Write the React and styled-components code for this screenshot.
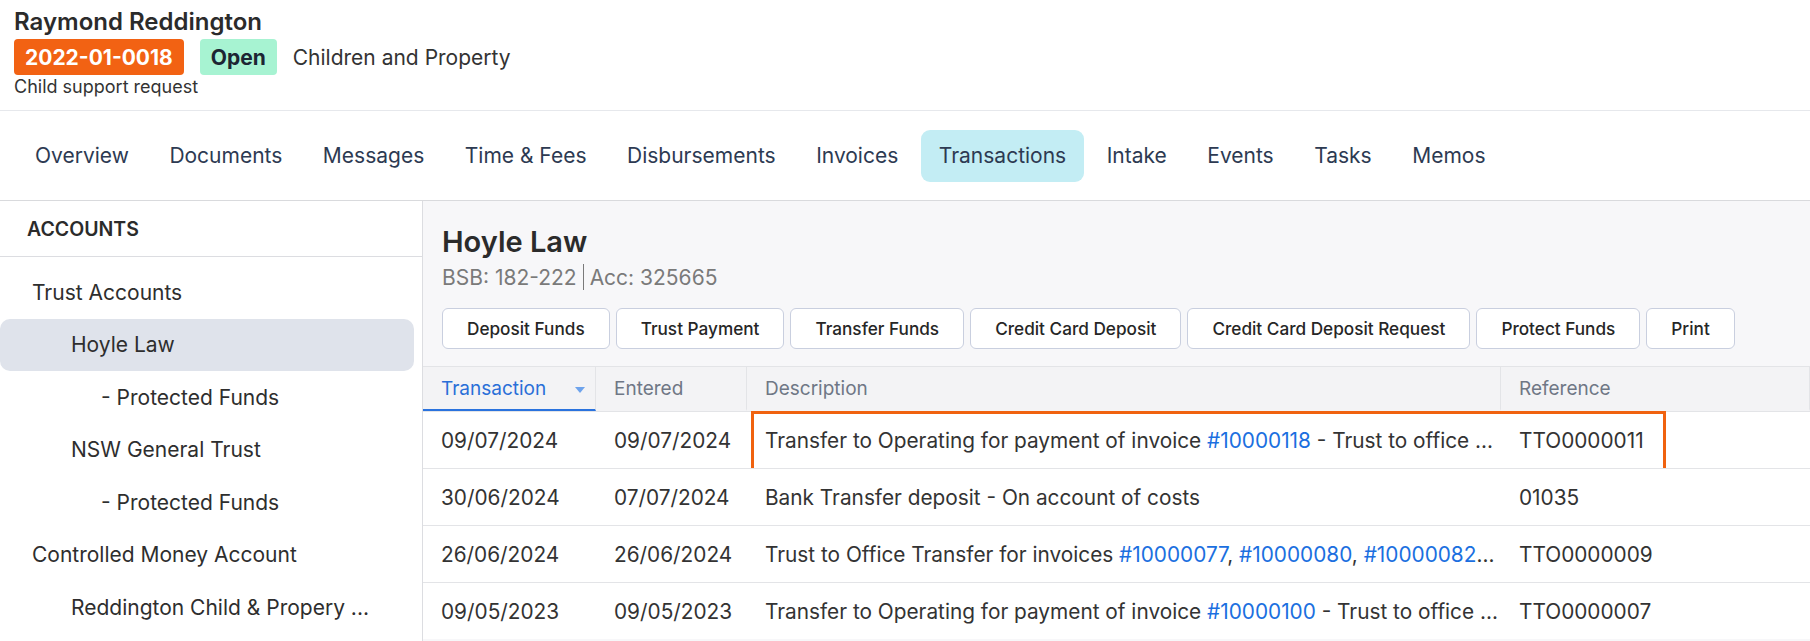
import React from 'react';
import styled, { createGlobalStyle } from 'styled-components';

const GlobalStyle = createGlobalStyle`
  html, body {
    margin: 0;
    padding: 0;
    background: #fff;
    font-family: Inter, "Open Sans", sans-serif;
    color: #2e2e2e;
  }
  * {
    box-sizing: border-box;
  }
`;

const Page = styled.div`
  width: 1810px;
  height: 641px;
  overflow: hidden;
  display: flex;
  flex-direction: column;
`;

const Header = styled.header`
  height: 111px;
  flex-shrink: 0;
  padding: 7px 14px 0;
  border-bottom: 1px solid #e6e8ec;
`;

const Title = styled.h1`
  margin: 0;
  font-size: 24px;
  line-height: 30px;
  font-weight: 600;
  color: #2b2b2b;
`;

const BadgeRow = styled.div`
  display: flex;
  align-items: center;
  gap: 16px;
  margin-top: 2px;
`;

const Badge = styled.span`
  display: inline-flex;
  align-items: center;
  height: 36px;
  padding: 0 11px;
  border-radius: 4px;
  font-size: 21px;
  font-weight: 700;
  background: ${(p) => (p.$tone === 'orange' ? '#f26213' : '#a7f3d2')};
  color: ${(p) => (p.$tone === 'orange' ? '#fff' : '#1c2533')};
`;

const Category = styled.span`
  font-size: 21px;
  color: #333;
`;

const Sub = styled.div`
  margin-top: 1px;
  font-size: 18px;
  line-height: 22px;
  color: #333;
`;

const Tabs = styled.nav`
  height: 90px;
  flex-shrink: 0;
  display: flex;
  align-items: center;
  gap: 4.5px;
  padding-left: 17px;
  border-bottom: 1px solid #d9dadd;
`;

const Tab = styled.div`
  height: 52px;
  display: flex;
  align-items: center;
  padding: 0 18px;
  border-radius: 9px;
  font-size: 21px;
  color: #2d3a52;
  background: ${(p) => (p.$active ? '#c3edf4' : 'transparent')};
`;

const Body = styled.div`
  flex: 1;
  display: flex;
  min-height: 0;
`;

const Sidebar = styled.aside`
  width: 423px;
  flex-shrink: 0;
  border-right: 1px solid #dcdde1;
`;

const SideHead = styled.div`
  height: 56px;
  display: flex;
  align-items: center;
  padding-left: 27px;
  border-bottom: 1px solid #dcdde1;
  font-size: 19.5px;
  font-weight: 600;
  color: #2b2b2b;
`;

const SideList = styled.div`
  padding: 9px 8px 0 0;
`;

const SideItem = styled.div`
  height: 52.5px;
  display: flex;
  align-items: center;
  padding-left: ${(p) => [32, 71, 101][p.$level]}px;
  border-radius: 10px;
  font-size: 21px;
  color: #2e2e2e;
  white-space: nowrap;
  background: ${(p) => (p.$active ? '#dfe3eb' : 'transparent')};
`;

const Main = styled.main`
  flex: 1;
  min-width: 0;
  background: #f7f7f9;
  padding-top: 23px;
`;

const AccountHead = styled.div`
  padding: 0 19px;
`;

const AccountName = styled.h2`
  margin: 0;
  font-size: 29px;
  line-height: 36px;
  font-weight: 600;
  color: #2b2b2b;
`;

const AccountMeta = styled.div`
  display: flex;
  align-items: center;
  height: 26px;
  margin-top: 4px;
  font-size: 21px;
  color: #7a7a7a;
`;

const Divider = styled.span`
  width: 1px;
  height: 26px;
  margin: 0 6px;
  background: #7a7a7a;
`;

const Actions = styled.div`
  display: flex;
  gap: 6px;
  margin-top: 18px;
`;

const Button = styled.button`
  height: 41px;
  padding: 0 24px;
  border: 1px solid #c9cfdf;
  border-radius: 6px;
  background: #fff;
  font-family: inherit;
  font-size: 17.2px;
  font-weight: 500;
  color: #262626;
`;

const Table = styled.div`
  margin-top: 17px;
`;

const Row = styled.div`
  position: relative;
  display: grid;
  grid-template-columns: 173px 151px 754px 1fr;
  height: ${(p) => (p.$head ? '45px' : '57px')};
  background: ${(p) => (p.$head ? '#f3f3f5' : '#fff')};
  border-top: 1px solid #e3e4e7;
`;

const HeadCell = styled.div`
  position: relative;
  display: flex;
  align-items: center;
  padding: 0 18px;
  border-right: 1px solid #e3e4e7;
  font-size: 19px;
  color: ${(p) => (p.$active ? '#2a6fd8' : '#6f7785')};
  border-bottom: 2px solid ${(p) => (p.$active ? '#2a73de' : 'transparent')};
`;

const SortArrow = styled.span`
  position: absolute;
  right: 10px;
  top: 20px;
  width: 0;
  height: 0;
  border-left: 5px solid transparent;
  border-right: 5px solid transparent;
  border-top: 6px solid #6ea3ec;
`;

const Cell = styled.div`
  display: flex;
  align-items: center;
  padding: 0 2px 0 18px;
  font-size: 20.8px;
  color: #333;
  min-width: 0;
  overflow: hidden;
`;

const Clip = styled.span`
  flex: 1;
  min-width: 0;
  white-space: nowrap;
  overflow: hidden;
  text-overflow: ellipsis;
`;

const Link = styled.a`
  color: #1b6fe0;
  text-decoration: none;
`;

const Highlight = styled.div`
  position: absolute;
  left: 328px;
  top: -1px;
  width: 915px;
  height: 60px;
  border: 3px solid #f0620f;
  pointer-events: none;
`;

const tabs = ['Overview', 'Documents', 'Messages', 'Time & Fees', 'Disbursements', 'Invoices', 'Transactions', 'Intake', 'Events', 'Tasks', 'Memos'];

const accounts = [
  { label: 'Trust Accounts', level: 0 },
  { label: 'Hoyle Law', level: 1, active: true },
  { label: '- Protected Funds', level: 2 },
  { label: 'NSW General Trust', level: 1 },
  { label: '- Protected Funds', level: 2 },
  { label: 'Controlled Money Account', level: 0 },
  { label: 'Reddington Child & Propery ...', level: 1 },
];

const actions = ['Deposit Funds', 'Trust Payment', 'Transfer Funds', 'Credit Card Deposit', 'Credit Card Deposit Request', 'Protect Funds', 'Print'];

const rows = [
  {
    date: '09/07/2024',
    entered: '09/07/2024',
    desc: <>Transfer to Operating for payment of invoice <Link>#10000118</Link> - Trust to office transfer</>,
    ref: 'TTO0000011',
    marked: true,
  },
  { date: '30/06/2024', entered: '07/07/2024', desc: 'Bank Transfer deposit - On account of costs', ref: '01035' },
  {
    date: '26/06/2024',
    entered: '26/06/2024',
    desc: <>Trust to Office Transfer for invoices <Link>#10000077</Link>, <Link>#10000080</Link>, <Link>#10000082</Link>, <Link>#10000090</Link></>,
    ref: 'TTO0000009',
  },
  {
    date: '09/05/2023',
    entered: '09/05/2023',
    desc: <>Transfer to Operating for payment of invoice <Link>#10000100</Link> - Trust to office transfer</>,
    ref: 'TTO0000007',
  },
];

export default function App() {
  return (
    <Page>
      <GlobalStyle />
      <Header>
        <Title>Raymond Reddington</Title>
        <BadgeRow>
          <Badge $tone="orange">2022-01-0018</Badge>
          <Badge $tone="green">Open</Badge>
          <Category>Children and Property</Category>
        </BadgeRow>
        <Sub>Child support request</Sub>
      </Header>
      <Tabs>
        {tabs.map((t) => (
          <Tab key={t} $active={t === 'Transactions'}>{t}</Tab>
        ))}
      </Tabs>
      <Body>
        <Sidebar>
          <SideHead>ACCOUNTS</SideHead>
          <SideList>
            {accounts.map((a, i) => (
              <SideItem key={i} $level={a.level} $active={a.active}>{a.label}</SideItem>
            ))}
          </SideList>
        </Sidebar>
        <Main>
          <AccountHead>
            <AccountName>Hoyle Law</AccountName>
            <AccountMeta>
              BSB: 182-222<Divider />Acc: 325665
            </AccountMeta>
            <Actions>
              {actions.map((a) => (
                <Button key={a}>{a}</Button>
              ))}
            </Actions>
          </AccountHead>
          <Table>
            <Row $head>
              <HeadCell $active>
                Transaction
                <SortArrow />
              </HeadCell>
              <HeadCell>Entered</HeadCell>
              <HeadCell>Description</HeadCell>
              <HeadCell>Reference</HeadCell>
            </Row>
            {rows.map((r) => (
              <Row key={r.ref}>
                <Cell>{r.date}</Cell>
                <Cell>{r.entered}</Cell>
                <Cell><Clip>{r.desc}</Clip></Cell>
                <Cell>{r.ref}</Cell>
                {r.marked && <Highlight />}
              </Row>
            ))}
          </Table>
        </Main>
      </Body>
    </Page>
  );
}
